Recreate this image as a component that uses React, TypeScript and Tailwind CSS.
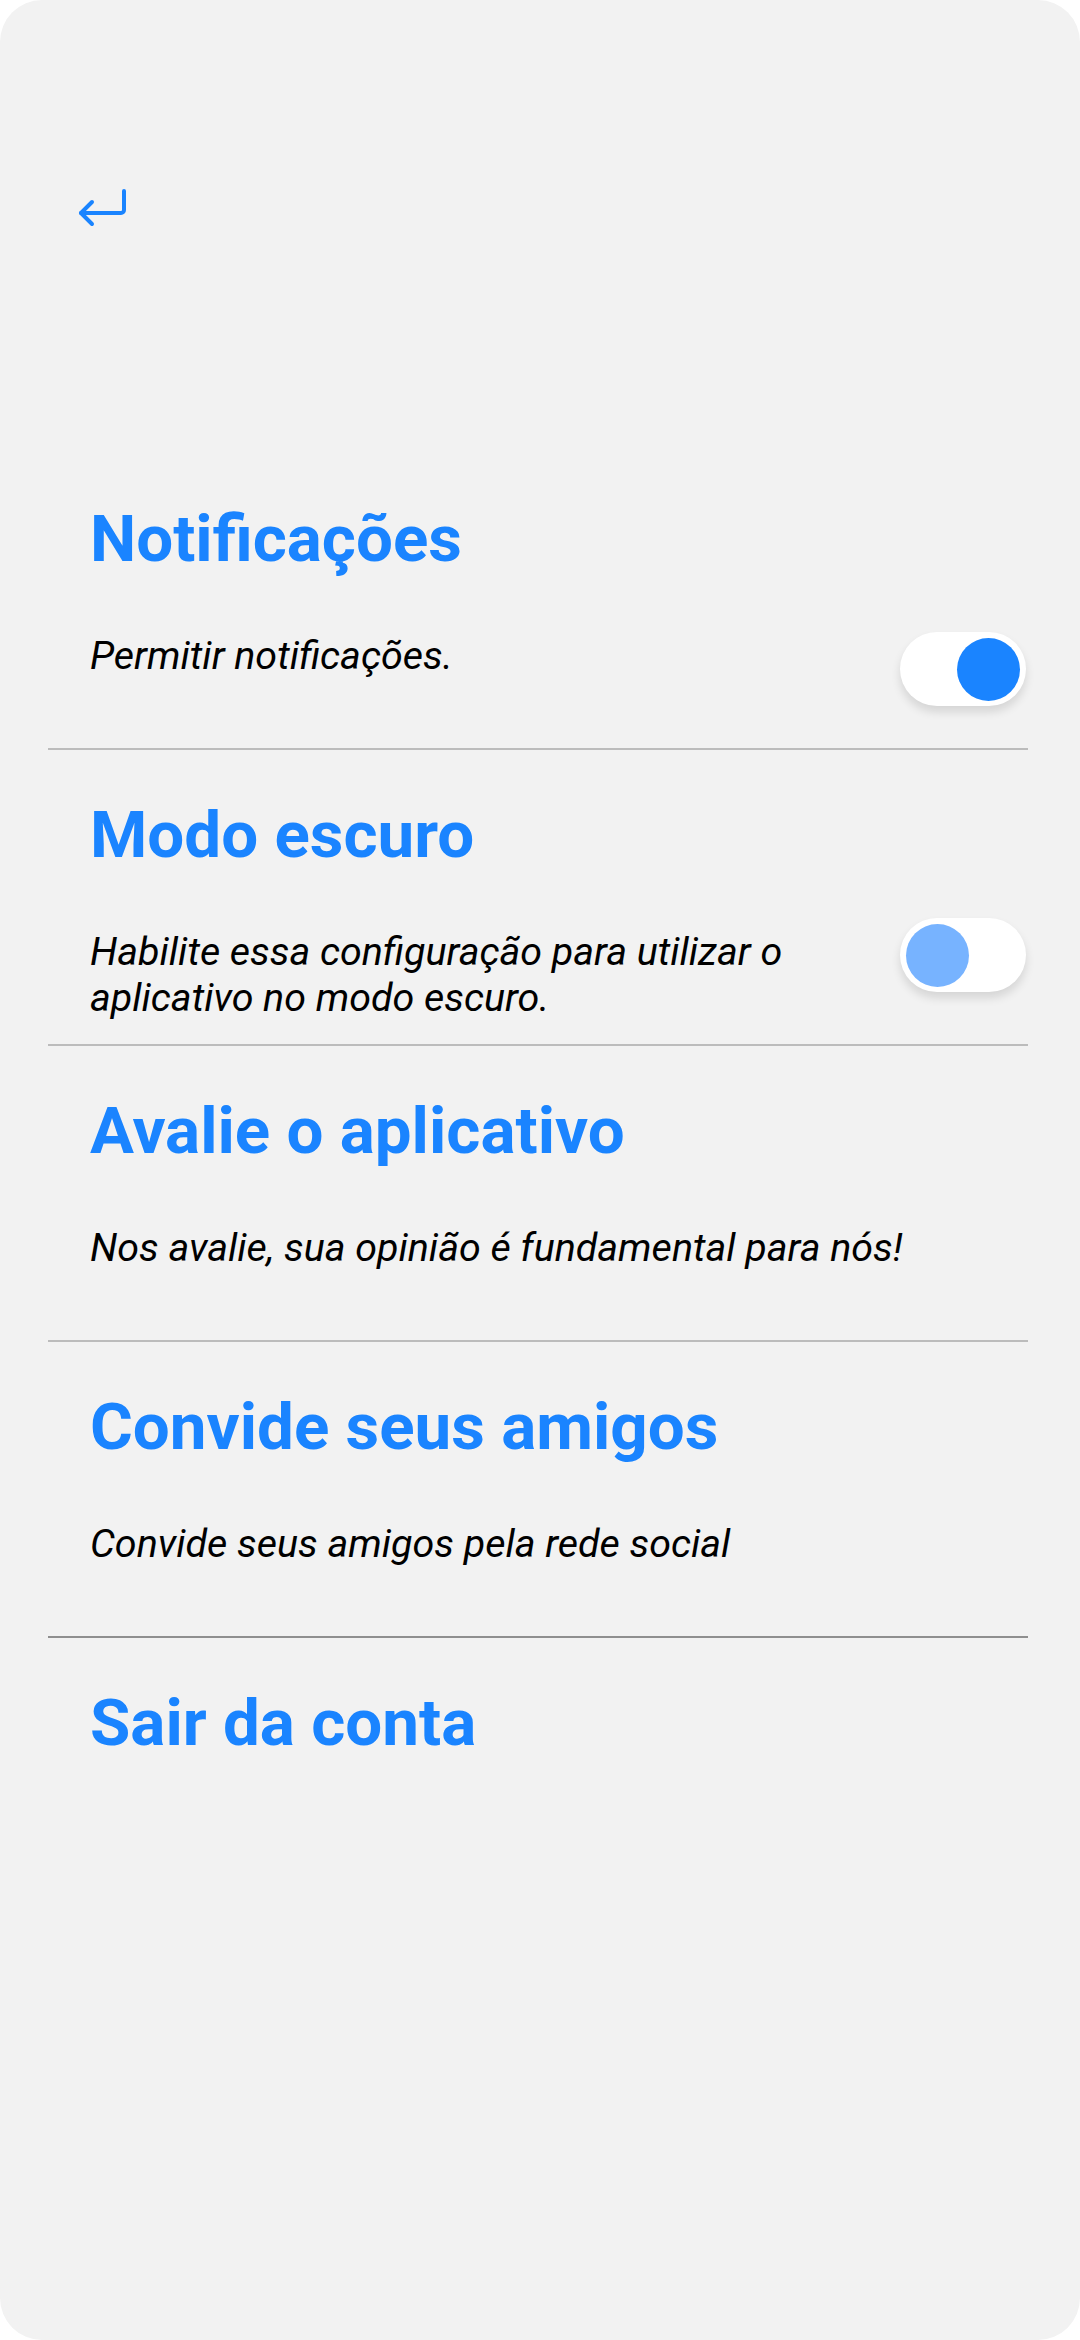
import React from "react";

type Item = {
  title: string;
  text?: string;
  toggle?: "on" | "off";
  divider?: string;
};

const items: Item[] = [
  { title: "Notificações", text: "Permitir notificações.", toggle: "on", divider: "bg-[#bcbcbc]" },
  {
    title: "Modo escuro",
    text: "Habilite essa configuração para utilizar o aplicativo no modo escuro.",
    toggle: "off",
    divider: "bg-[#bcbcbc]",
  },
  { title: "Avalie o aplicativo", text: "Nos avalie, sua opinião é fundamental para nós!", divider: "bg-[#bcbcbc]" },
  { title: "Convide seus amigos", text: "Convide seus amigos pela rede social", divider: "bg-[#8f8f8f]" },
  { title: "Sair da conta" },
];

const Toggle = ({ on }: { on: boolean }) => (
  <div
    className={`shrink-0 w-[126px] h-[74px] rounded-full bg-white shadow-[0_6px_10px_rgba(0,0,0,0.12)] flex items-center px-[6px] ${
      on ? "justify-end mt-[-1px]" : "justify-start mt-[-11px]"
    }`}
  >
    <div className={`w-[63px] h-[63px] rounded-full ${on ? "bg-[#1a84ff]" : "bg-[#77b3ff]"}`} />
  </div>
);

export default function App() {
  return (
    <div className="w-[1080px] min-h-[2340px] bg-white" style={{ fontFamily: "Roboto, 'Noto Sans', sans-serif" }}>
      <div className="min-h-[2340px] rounded-[42px] bg-[#f2f2f2] flex flex-col">
        {/* back */}
        <div className="pl-[76px] pt-[186px]">
          <svg width="56" height="44" viewBox="0 0 56 44" fill="none" stroke="#1a84ff" strokeWidth="4" strokeLinecap="round" strokeLinejoin="round">
            <path d="M48 5v19a3 3 0 0 1-3 3H5" />
            <path d="M16 16 5 27l11 11" />
          </svg>
        </div>

        <div className="mt-[272px]">
          {items.map((it, i) => (
            <div key={i}>
              <div className={i === 0 ? "" : "pt-[48px]"}>
                <h2 className="pl-[90px] text-[65.5px] leading-[74px] font-bold text-[#1a84ff]">{it.title}</h2>
                {it.text && (
                  <div className="mt-[57px] h-[115px] pl-[90px] pr-[54px] flex items-start gap-[20px]">
                    <p className="flex-1 text-[39.4px] leading-[46px] italic text-black">{it.text}</p>
                    {it.toggle && <Toggle on={it.toggle === "on"} />}
                  </div>
                )}
              </div>
              {it.divider && <div className={`ml-[48px] w-[980px] h-[2px] ${it.divider}`} />}
            </div>
          ))}
        </div>
      </div>
    </div>
  );
}
